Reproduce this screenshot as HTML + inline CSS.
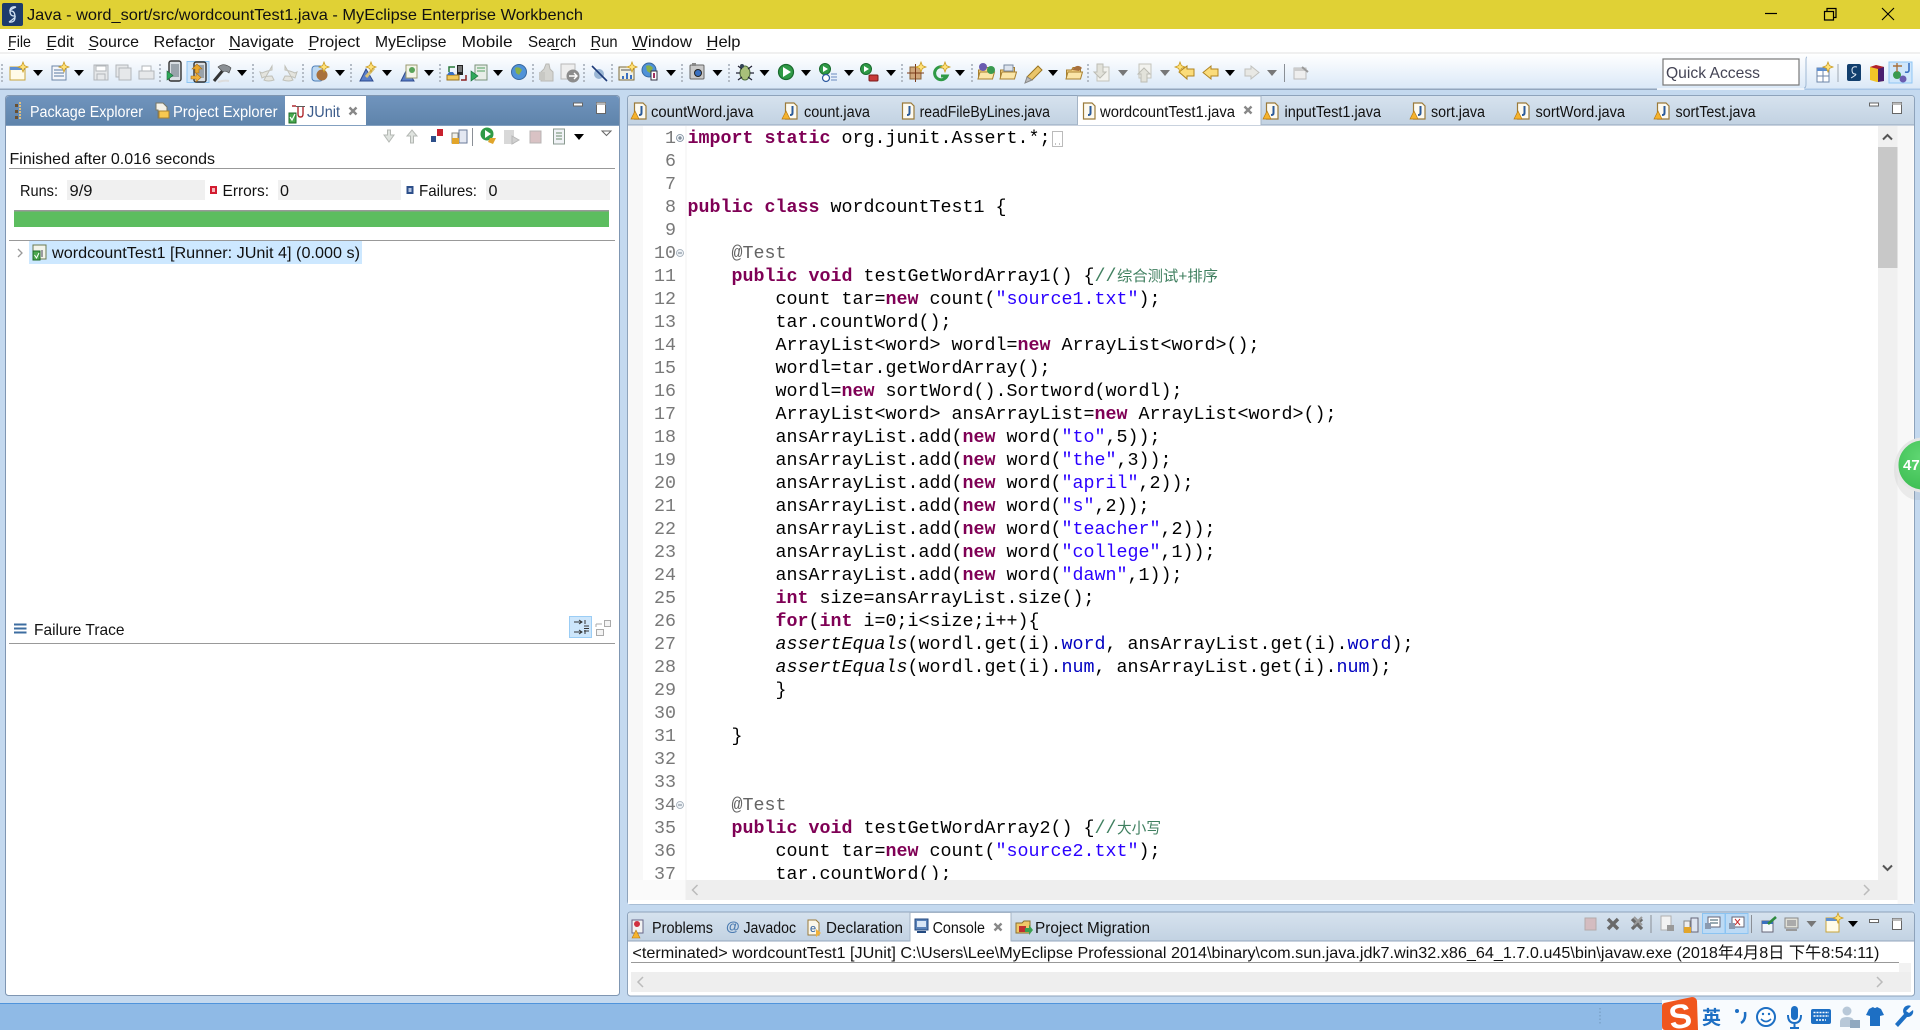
<!DOCTYPE html>
<html lang="en"><head><meta charset="utf-8"><title>Java - word_sort/src/wordcountTest1.java - MyEclipse Enterprise Workbench</title>
<style>
html,body{margin:0;padding:0;width:1920px;height:1030px;overflow:hidden;background:#c4d9ef}
svg{display:block}
text{font-family:"Liberation Sans","Noto Sans CJK SC",sans-serif;font-size:15.5px;fill:#111;white-space:pre}
.m text,text.m{font-size:16px}
.c text{font-family:"Liberation Mono","Noto Sans CJK SC",monospace;font-size:18.33px;fill:#000}
.n text{font-family:"Liberation Mono",monospace;font-size:18.33px;fill:#787878;text-anchor:end}
.k{fill:#7f0055!important;font-weight:bold}
.s{fill:#2a00ff!important}
.f{fill:#0000c0!important}
.a{fill:#646464!important}
.i{font-style:italic}
.g{fill:#3f7f5f!important}
.z{font-family:"Liberation Sans","Noto Sans CJK SC",sans-serif!important;font-size:15px!important;fill:#3f7f5f!important}
.w text{fill:#fff}
</style></head><body>
<svg xmlns="http://www.w3.org/2000/svg" width="1920" height="1030" viewBox="0 0 1920 1030">
<defs>
<linearGradient id="tb" x1="0" y1="0" x2="0" y2="1"><stop offset="0" stop-color="#fff"/><stop offset="1" stop-color="#dae8f7"/></linearGradient>
<linearGradient id="lt" x1="0" y1="0" x2="0" y2="1"><stop offset="0" stop-color="#7094bd"/><stop offset="1" stop-color="#5f84ab"/></linearGradient>
<linearGradient id="et" x1="0" y1="0" x2="0" y2="1"><stop offset="0" stop-color="#d6e2ee"/><stop offset="1" stop-color="#c2d2e2"/></linearGradient>
<radialGradient id="gc" cx=".45" cy=".35" r=".8"><stop offset="0" stop-color="#5fd672"/><stop offset="1" stop-color="#36b94c"/></radialGradient>
<path id="ar" d="M-5 -3H5L0 3Z" fill="#000"/>
<path id="ag" d="M-5 -3H5L0 3Z" fill="#777"/>
<path id="st" d="M0-5L1.4-1.4 5 0 1.4 1.4 0 5-1.4 1.4-5 0-1.4-1.4Z" fill="#ffe27a" stroke="#c99a20" stroke-width=".8"/>
<g id="jf"><path d="M-5.5-8H3L6-5V8H-5.5Z" fill="#fdfaf0" stroke="#9a7a3a" stroke-width="1.2"/><path d="M1.5-5V2Q1.5 4-1 4" fill="none" stroke="#2a5a9a" stroke-width="2"/></g>
<g id="jw"><use href="#jf"/><path d="M-9 8L-5 0-1 8Z" fill="#f5b32e" stroke="#b87a10" stroke-width=".7"/></g>
<g id="grip"><path d="M0-8V10" stroke="#b4bcc6" stroke-width="2" stroke-dasharray="2 2"/></g>
<g id="minb"><rect x="-4.5" y="-1.5" width="9" height="3" fill="#fff" stroke="#666"/></g>
<g id="maxb"><rect x="-4.5" y="-5.5" width="9" height="11" fill="#fff" stroke="#666"/><rect x="-4.5" y="-5.5" width="9" height="2.5" fill="#bbb"/></g>
<path id="xc" d="M-3.5-3.5L3.5 3.5M3.5-3.5L-3.5 3.5" stroke="#888" stroke-width="2.4" fill="none"/>
<g id="fold"><path d="M-7.5-3H-2.5L-1-5.5H6.5V6H-7.5Z" fill="#f8d88a" stroke="#a88030"/><path d="M-8 6L-6-1H8.5L6.5 6Z" fill="#fbe6a8" stroke="#a88030"/></g>
<g id="phone"><rect x="-6" y="-10" width="12" height="20" rx="2" fill="#d8dde2" stroke="#333" stroke-width="1.4"/><rect x="-4" y="-7" width="8" height="13" fill="#9aa3ab"/></g>
</defs>

<!-- window background -->
<rect width="1920" height="1030" fill="#c4d9ef"/>
<!-- title bar -->
<rect width="1920" height="29" fill="#e0d135"/>
<rect x="2" y="3" width="21" height="23" rx="2" fill="#1d3c6c"/>
<path d="M16 7Q10 6 10 11T14 16 9 22M9 22Q15 23 15 17T11 11 16 7" fill="none" stroke="#cfe0f2" stroke-width="1.3"/>
<text class="m" x="27" y="20" textLength="556" lengthAdjust="spacingAndGlyphs">Java - word_sort/src/wordcountTest1.java - MyEclipse Enterprise Workbench</text>
<path d="M1765 13.5H1777" stroke="#000" stroke-width="1.2"/>
<path d="M1824.5 11.5H1833.5V20H1824.5ZM1827 11.5V8.5H1836V17.5H1833.5" fill="none" stroke="#000" stroke-width="1.2"/>
<path d="M1882 8L1894 20M1894 8L1882 20" stroke="#000" stroke-width="1.1"/>

<!-- menu -->
<rect y="29" width="1920" height="23" fill="#fff"/>
<rect y="52" width="1920" height="2" fill="#f0f0f0"/>
<g class="m">
<text x="8" y="47" textLength="23" lengthAdjust="spacingAndGlyphs">File</text>
<text x="46.5" y="47" textLength="27.5" lengthAdjust="spacingAndGlyphs">Edit</text>
<text x="88.5" y="47" textLength="50.5" lengthAdjust="spacingAndGlyphs">Source</text>
<text x="153.5" y="47" textLength="61.5" lengthAdjust="spacingAndGlyphs">Refactor</text>
<text x="229" y="47" textLength="65" lengthAdjust="spacingAndGlyphs">Navigate</text>
<text x="308.5" y="47" textLength="51.5" lengthAdjust="spacingAndGlyphs">Project</text>
<text x="375" y="47" textLength="71.5" lengthAdjust="spacingAndGlyphs">MyEclipse</text>
<text x="461.6" y="47" textLength="51" lengthAdjust="spacingAndGlyphs">Mobile</text>
<text x="528" y="47" textLength="48" lengthAdjust="spacingAndGlyphs">Search</text>
<text x="590.6" y="47" textLength="27" lengthAdjust="spacingAndGlyphs">Run</text>
<text x="632" y="47" textLength="60" lengthAdjust="spacingAndGlyphs">Window</text>
<text x="706.5" y="47" textLength="34" lengthAdjust="spacingAndGlyphs">Help</text>
</g>
<path d="M8 49.5H15M46.5 49.5H54M88.5 49.5H96M195 49.5H201M229 49.5H240M308.5 49.5H316M551 49.5H559M590.6 49.5H599M632 49.5H646M706.5 49.5H716" stroke="#111" stroke-width="1"/>

<!-- toolbar -->
<rect y="54" width="1920" height="35" fill="url(#tb)"/>
<rect y="88.5" width="1657" height="1.5" fill="#93a6bd"/>
<rect x="1657" y="88" width="147" height="2" fill="#eef4fb"/>
<rect x="1805" y="88.5" width="115" height="1.5" fill="#a9c6e6"/>

<!-- grippers -->
<use href="#grip" x="2" y="72"/><use href="#grip" x="160" y="72"/><use href="#grip" x="253" y="72"/><use href="#grip" x="303" y="72"/><use href="#grip" x="351" y="72"/><use href="#grip" x="440" y="72"/><use href="#grip" x="533" y="72"/><use href="#grip" x="584" y="72"/><use href="#grip" x="612" y="72"/><use href="#grip" x="682" y="72"/><use href="#grip" x="729" y="72"/><use href="#grip" x="902" y="72"/><use href="#grip" x="972" y="72"/><use href="#grip" x="1088" y="72"/>
<rect x="1284" y="64" width="1" height="18" fill="#8a8f96"/>

<!-- drop arrows -->
<use href="#ar" x="38" y="73"/><use href="#ar" x="79" y="73"/><use href="#ar" x="242" y="73"/><use href="#ar" x="340" y="73"/><use href="#ar" x="387" y="73"/><use href="#ar" x="429" y="73"/><use href="#ar" x="498" y="73"/><use href="#ar" x="671" y="73"/><use href="#ar" x="717.5" y="73"/><use href="#ar" x="764.5" y="73"/><use href="#ar" x="806" y="73"/><use href="#ar" x="849" y="73"/><use href="#ar" x="891" y="73"/><use href="#ar" x="960" y="73"/><use href="#ar" x="1053" y="73"/><use href="#ag" x="1123" y="73"/><use href="#ag" x="1165" y="73"/><use href="#ar" x="1230" y="73"/><use href="#ag" x="1272" y="73"/>

<!-- toolbar icons -->
<rect x="10" y="67" width="15" height="13" fill="#fffbe8" stroke="#c9a53a"/><rect x="10" y="67" width="15" height="3" fill="#5f8fd0"/><use href="#st" x="23" y="67"/>
<rect x="52" y="66" width="14" height="14" fill="#f4f6fa" stroke="#6d86a8"/><path d="M54 70H64M54 73H64M54 76H64" stroke="#5878a0"/><use href="#st" x="64" y="67"/>
<g fill="#e6e8ea" stroke="#b2b6ba"><rect x="94" y="65" width="14" height="15"/><rect x="96" y="66" width="10" height="5" fill="#fff"/><rect x="97" y="74" width="8" height="6"/>
<rect x="116" y="65" width="12" height="12"/><rect x="119" y="68" width="12" height="12"/>
<rect x="142" y="66" width="9" height="6" fill="#fff"/><rect x="139" y="71" width="15" height="8"/></g>
<use href="#phone" x="175" y="71"/><path d="M167 71V80L173 75.5Z" fill="#2fa85a" stroke="#176e38" stroke-width=".6"/>
<rect x="187" y="61.5" width="22" height="21" fill="#cfe6fb" stroke="#8fc6f4"/>
<use href="#phone" x="200" y="72"/><path d="M197 64L192 69H195V73H199V69H202Z" fill="#e9a62b" stroke="#a8701a" stroke-width=".6"/><path d="M191 76H196V73L201 77.5 196 82V79H191Z" fill="#f0b23a" stroke="#a8701a" stroke-width=".6"/>
<path d="M214 81L224 69" stroke="#333" stroke-width="3"/><path d="M218 67Q224 62 231 68L229 73Q225 70 223 72Z" fill="#8a8f94" stroke="#444" stroke-width=".6"/><path d="M218 82Q224 80 229 81" stroke="#ddd" stroke-width="2" fill="none"/>
<path d="M272 66L272 70Q266 71 262 73L260 72 262 78Q265 76 272 76 273 78 274 80 268 82 264 80Z" fill="#e4e4de" stroke="#c0c0b8"/><path d="M285 66L285 70Q291 71 295 73L297 72 295 78Q292 76 285 76 284 78 283 80 289 82 293 80Z" fill="#e4e4de" stroke="#c0c0b8"/>
<rect x="312" y="66" width="11" height="15" rx="3" fill="#bcd8f2" stroke="#4f7fb8"/><circle cx="322" cy="75" r="5.5" fill="#a8703c"/><use href="#st" x="324" y="67"/>
<path d="M360 81L366 69 373 81Z" fill="#5a7ec8" stroke="#2d4a8e"/><path d="M366 77L374 68" stroke="#d7c27a" stroke-width="3"/><use href="#st" x="371" y="67"/>
<path d="M401 81L407 69 414 81Z" fill="#5a7ec8" stroke="#2d4a8e"/><rect x="406" y="65" width="11" height="13" fill="#f4f4e8" stroke="#9a9a70"/><circle cx="412" cy="70" r="3" fill="#59a35a"/>
<rect x="457" y="65" width="6" height="10" fill="#222"/><path d="M458 67H462M458 69H462M458 71H462" stroke="#ccc"/><path d="M455 67H449V72" fill="none" stroke="#287a3a" stroke-width="1.5"/><path d="M447 75H459V80H447Z" fill="#f0c85a" stroke="#9a7420"/><path d="M447 75L449 72H453L455 75" fill="#3a70c0"/><path d="M461 80H466V75" fill="none" stroke="#8a2020" stroke-width="1.5"/>
<rect x="475" y="65" width="12" height="15" fill="#e8eee8" stroke="#7a927a"/><path d="M477 68H485M477 71H485" stroke="#50a060"/><path d="M471 71V81L478 76Z" fill="#2fa85a" stroke="#176e38" stroke-width=".6"/>
<circle cx="519" cy="72" r="7.5" fill="#4f92d8" stroke="#36679e"/><path d="M515 68Q519 66 522 70L519 75 516 73Z" fill="#88b048"/>
<path d="M541 81V72L544 69 546 64H549L550 69 553 72V81Z" fill="#d4d4d0" stroke="#b8b8b4"/><rect x="539" y="72" width="6" height="8" fill="#c8c8c4"/>
<rect x="561" y="64" width="14" height="15" fill="#eee" stroke="#b8b8b8"/><circle cx="573" cy="76" r="6.5" fill="#8c8c8c"/><path d="M569 76H577M574 73L577 76 574 79" fill="none" stroke="#fff" stroke-width="1.4"/>
<circle cx="599" cy="74" r="5" fill="#9ab6d4"/><path d="M592 66L607 81" stroke="#1d3a78" stroke-width="1.6"/>
<rect x="619" y="67" width="15" height="13" fill="#f0f0e4" stroke="#7c6a3a"/><path d="M622 76H624V79H622ZM626 73H628V79H626ZM630 75H632V79H630Z" fill="#3a70c0"/><path d="M621 70H632" stroke="#555"/><use href="#st" x="632" y="67"/>
<circle cx="649" cy="70" r="7" fill="#4f92d8" stroke="#36679e"/><path d="M646 66Q650 64 653 68L650 73 647 71Z" fill="#88b048"/><rect x="651" y="71" width="6" height="9" fill="#fff" stroke="#334"/><rect x="653" y="73" width="2" height="5" fill="#a03060"/>
<rect x="690" y="65" width="14" height="14" rx="1" fill="#c9c9c9" stroke="#666"/><circle cx="698" cy="73" r="3.5" fill="#3a70c0" stroke="#222"/><rect x="692" y="63" width="4" height="3" fill="#888"/>
<ellipse cx="745" cy="73" rx="5" ry="7" fill="#a8c07a" stroke="#4a6a38"/><path d="M738 66L742 69M752 66L748 69M736 73H740M754 73H750M738 80L742 77M752 80L748 77" stroke="#223" stroke-width="1.2"/><circle cx="742" cy="66" r="2" fill="#345"/>
<circle cx="786" cy="72" r="7.5" fill="#2f9a46" stroke="#1a6a2e" stroke-width="1.2"/><path d="M783 67V77L791 72Z" fill="#fff"/>
<circle cx="825" cy="69" r="5.5" fill="#2f9a46" stroke="#1a6a2e"/><path d="M823 66V72L828 69Z" fill="#fff"/><circle cx="826" cy="78" r="3.5" fill="#fff" stroke="#2d5aa0" stroke-width="1.2"/><path d="M831 74H837M831 77H837M831 80H837" stroke="#6a8ac0"/>
<circle cx="866" cy="69" r="5.5" fill="#2f9a46" stroke="#1a6a2e"/><path d="M864 66V72L869 69Z" fill="#fff"/><rect x="869" y="75" width="9" height="6" rx="1" fill="#c83a3a" stroke="#7a1a1a"/>
<rect x="910" y="67" width="11" height="12" fill="#cfa67a" stroke="#8a6238"/><path d="M915.5 64V82M907 73H924" stroke="#7a3a1a"/><use href="#st" x="921" y="67"/>
<path d="M945 68A6.5 6.5 0 1 0 947 76H941" fill="none" stroke="#2f9a46" stroke-width="3"/><use href="#st" x="945" y="67"/>
<use href="#fold" x="986" y="73"/><circle cx="983" cy="67" r="4" fill="#6a5cb0"/><circle cx="991" cy="70" r="4" fill="#3a9a50"/>
<use href="#fold" x="1008" y="73"/><rect x="1004" y="65" width="9" height="6" fill="#dde4ee" stroke="#7a8aa0"/>
<path d="M1027 77L1038 66 1042 70 1032 80Z" fill="#eac56a" stroke="#9a7420"/><path d="M1025 83L1027 77 1032 80Z" fill="#bbb" stroke="#888"/>
<use href="#fold" x="1074" y="73"/><path d="M1072 70Q1077 63 1082 68L1079 71Z" fill="#a8703c"/>
<rect x="1097" y="67" width="12" height="14" fill="#f2f2ee" stroke="#c4c4bc"/><path d="M1097 64H1103V72H1106L1100 78 1094 72H1097Z" fill="#e2e2da" stroke="#bcbcb4"/>
<rect x="1139" y="64" width="12" height="14" fill="#f2f2ee" stroke="#c4c4bc"/><path d="M1141 82V74H1138L1144 68 1150 74H1147V82Z" fill="#e2e2da" stroke="#bcbcb4"/>
<path d="M1179 72L1187 66V69H1194V76H1187V79Z" fill="#fbdc7a" stroke="#b08420"/><use href="#st" x="1180" y="67"/>
<path d="M1203 72.5L1211 66V69H1218V76H1211V79Z" fill="#fbdc7a" stroke="#b08420"/>
<path d="M1259 72.5L1251 66V69H1245V76H1251V79Z" fill="#e8e8e4" stroke="#c0c0bc"/>
<rect x="1294" y="68" width="12" height="11" fill="#eee" stroke="#bbb"/><rect x="1294" y="68" width="12" height="3" fill="#ccc"/><path d="M1302 67L1308 72" stroke="#999" stroke-width="2"/>

<!-- quick access + perspectives -->
<rect x="1663" y="59" width="136" height="26" fill="#fff" stroke="#777" stroke-width="1.2"/>
<text x="1666" y="78" textLength="94" lengthAdjust="spacingAndGlyphs" style="font-size:16px;fill:#445">Quick Access</text>
<path d="M1807 57Q1806 57 1806 60V84Q1806 88 1804 88" fill="none" stroke="#9fb8d4"/>
<rect x="1817" y="68" width="12" height="14" fill="#fff" stroke="#6d86a8"/><rect x="1817" y="68" width="12" height="3" fill="#5f8fd0"/><path d="M1823 71V82M1817 76H1829" stroke="#6d86a8"/><use href="#st" x="1828" y="67"/>
<rect x="1837.5" y="64" width="1" height="18" fill="#9fa8b2"/>
<rect x="1847" y="64" width="14" height="17" rx="2" fill="#123f6e"/><path d="M1857 67Q1852 66 1852 70T1855 74 1851 78" fill="none" stroke="#dfe9f4" stroke-width="1"/>
<path d="M1870 67L1876 65 1884 67V81L1877 82 1870 80Z" fill="#f2c528"/><path d="M1878 66L1884 67V81L1878 82Z" fill="#4a1f6e"/><path d="M1870 67L1876 65 1884 67 1878 69Z" fill="#b02030"/>
<rect x="1889" y="62" width="23" height="21" fill="#cfe6fb" stroke="#8fc6f4"/><circle cx="1897" cy="75" r="4" fill="#3a9a50"/><circle cx="1903" cy="79" r="3.5" fill="#6a5cb0"/><path d="M1893 66H1902M1897 63V72" stroke="#a8703c" stroke-width="1.4"/><path d="M1909 63V70Q1909 73 1905 72" fill="none" stroke="#3a70c0" stroke-width="1.6"/>

<!-- LEFT PANEL -->
<rect x="5.5" y="95.5" width="614" height="900" rx="3" fill="#fff" stroke="#7f96b2"/>
<path d="M6 125V99Q6 96 9 96H616Q619 96 619 99V125Z" fill="url(#lt)"/>
<rect x="6" y="125" width="613" height="1" fill="#83a0c0"/>
<path d="M285 125V96H366V125Z" fill="#fff"/>
<g fill="#6a5030"><rect x="15" y="104" width="3" height="3"/><rect x="15" y="110" width="3" height="3"/><rect x="15" y="116" width="3" height="3"/></g><path d="M20 102V120" stroke="#e0c080" stroke-width="2" stroke-dasharray="2 1"/>
<path d="M156 103H163L167 107V118H158V110H156Z" fill="#f4f2e8" stroke="#776"/><rect x="159" y="111" width="10" height="7" fill="#f8c850" stroke="#a88030"/>
<path d="M289 113V123H296V113Z" fill="#49a84e" stroke="#1e6a28"/><path d="M290 117L292 120 295 114" stroke="#fff" fill="none" stroke-width="1.2"/><path d="M292 106H296M298 107V114Q298 117 300.5 117T303 114V107" fill="none" stroke="#b02a30" stroke-width="1.4"/><path d="M296 106.5H305" stroke="#333" stroke-width=".8"/>
<g class="w">
<text x="30" y="117" textLength="113" lengthAdjust="spacingAndGlyphs">Package Explorer</text>
<text x="173" y="117" textLength="104.5" lengthAdjust="spacingAndGlyphs">Project Explorer</text>
</g>
<text x="307" y="117" textLength="33" lengthAdjust="spacingAndGlyphs" style="fill:#3a5a8a">JUnit</text>
<use href="#xc" x="353" y="111"/>
<use href="#minb" x="578" y="104.5"/><use href="#maxb" x="601" y="108"/>

<!-- junit toolbar -->
<path d="M387.5 130V135H384L389 142 394 135H390.5V130Z" fill="#dfe3df" stroke="#b4b8b4"/>
<path d="M410.5 143V136H407L412 130 417 136H413.5V143Z" fill="#dfe3df" stroke="#b4b8b4"/>
<rect x="431" y="136" width="5" height="6" fill="#2d4f8a"/><rect x="437" y="129" width="6" height="7" fill="#c8202e"/>
<rect x="452" y="133" width="6" height="10" fill="#f0f0ea" stroke="#8a8a80"/><rect x="459" y="130" width="8" height="13" fill="#e4e8f2" stroke="#6a7a98"/><rect x="452" y="138" width="7" height="6" fill="#e2a52a"/>
<rect x="472" y="128" width="1" height="18" fill="#8a8f96"/>
<circle cx="487" cy="134" r="6.5" fill="#2f9a46"/><path d="M485 130V138L491 134Z" fill="#fff"/><path d="M490 138H496L493 144 488 142Z" fill="#e0a52a"/>
<rect x="504" y="130" width="10" height="14" fill="#d8d8d8"/><path d="M512 136L519 140 512 144Z" fill="#d0d0d0" stroke="#b8b8b8"/>
<rect x="530" y="131" width="11" height="12" fill="#d9c2c4" stroke="#b8b4b4"/>
<rect x="553.5" y="129" width="11" height="15" fill="#f0f2f6" stroke="#8a9a90"/><path d="M556 133H562M556 136H562M556 139H562" stroke="#6a8a6a"/>
<use href="#ar" x="579" y="137"/>
<path d="M602 131H611L606.5 135.5Z" fill="#fff" stroke="#666"/>

<text x="9.5" y="164" textLength="205.5" lengthAdjust="spacingAndGlyphs" class="m">Finished after 0.016 seconds</text>
<rect x="9" y="168" width="606" height="1" fill="#999"/>
<rect x="67" y="180" width="138" height="20" fill="#f0f0f0"/>
<rect x="278" y="180" width="123" height="20" fill="#f0f0f0"/>
<rect x="486" y="180" width="124" height="20" fill="#f0f0f0"/>
<text x="20" y="196" textLength="38" lengthAdjust="spacingAndGlyphs" class="m">Runs:</text>
<text x="69.5" y="196" textLength="23" lengthAdjust="spacingAndGlyphs" class="m">9/9</text>
<rect x="210" y="186" width="7" height="8" fill="#d31c30"/><rect x="212" y="188" width="3" height="4" fill="#f6b6bc"/>
<text x="222.5" y="196" textLength="46.5" lengthAdjust="spacingAndGlyphs" class="m">Errors:</text>
<text x="280" y="196" textLength="9" lengthAdjust="spacingAndGlyphs" class="m">0</text>
<rect x="406.5" y="186" width="7" height="8" fill="#2d4f8a"/><rect x="408.5" y="188" width="3" height="4" fill="#b6c6e2"/>
<text x="419" y="196" textLength="58" lengthAdjust="spacingAndGlyphs" class="m">Failures:</text>
<text x="488.5" y="196" textLength="9" lengthAdjust="spacingAndGlyphs" class="m">0</text>
<rect x="14" y="210" width="595" height="17" fill="#5cbd5f"/><rect x="14" y="210" width="595" height="1.5" fill="#999"/>
<rect x="9" y="240" width="606" height="1" fill="#999"/>
<rect x="29" y="241" width="333" height="23" fill="#cde8ff"/>
<path d="M18 249L22 253 18 257" fill="none" stroke="#999" stroke-width="1.3"/>
<rect x="33" y="245" width="13" height="14" fill="#f2f4ea" stroke="#6a7a50"/><rect x="33" y="251" width="7" height="9" fill="#4aa84e" stroke="#1e6a28"/><path d="M34.5 255L36.5 258 39 253" stroke="#fff" fill="none"/><path d="M42 250V257" stroke="#445"/>
<text x="52" y="258" textLength="308" lengthAdjust="spacingAndGlyphs" class="m">wordcountTest1 [Runner: JUnit 4] (0.000 s)</text>
<path d="M14 624.5H26.5M14 628.5H26.5M14 632.5H26.5" stroke="#3d6da0" stroke-width="2"/>
<text x="34" y="635" textLength="90.5" lengthAdjust="spacingAndGlyphs" class="m">Failure Trace</text>
<rect x="569.5" y="616.5" width="22" height="21" fill="#cde6fb" stroke="#9bcdf5"/>
<path d="M574 622H582M579 620L582 622 579 624M574 632H582M579 630L582 632 579 634M585 620V624M585 630V634M584 626H589M584 628.5H589M584 631H589" stroke="#333" fill="none"/>
<g fill="#f4f4f4" stroke="#aaa"><rect x="604.5" y="620.5" width="6" height="6"/><rect x="596.5" y="629.5" width="7" height="6"/></g><path d="M596 624H602M596 624V627" stroke="#aaa" fill="none"/>
<rect x="9" y="643" width="606" height="1" fill="#999"/>

<!-- EDITOR PANEL -->
<rect x="627.5" y="95.5" width="1287" height="808.5" rx="3" fill="#fff" stroke="#8ea3bb"/>
<path d="M628 125V99Q628 96 631 96H1911Q1914 96 1914 99V125Z" fill="url(#et)"/>
<rect x="628" y="124.5" width="1286" height="1" fill="#93a6bc"/>
<path d="M1077.5 125V96H1261V125Z" fill="#fff"/>
<path d="M1077.5 125V96H1261V125" fill="none" stroke="#a4b4c6"/>
<use href="#jw" x="640" y="111"/><use href="#jw" x="791" y="111"/><use href="#jf" x="908" y="111"/><use href="#jf" x="1089" y="111"/><use href="#jw" x="1272" y="111"/><use href="#jw" x="1419" y="111"/><use href="#jw" x="1523" y="111"/><use href="#jw" x="1663" y="111"/>
<text x="651" y="117" textLength="102.5" lengthAdjust="spacingAndGlyphs">countWord.java</text>
<text x="804" y="117" textLength="66" lengthAdjust="spacingAndGlyphs">count.java</text>
<text x="919.6" y="117" textLength="130.4" lengthAdjust="spacingAndGlyphs">readFileByLines.java</text>
<text x="1100" y="117" textLength="135" lengthAdjust="spacingAndGlyphs">wordcountTest1.java</text>
<use href="#xc" x="1248" y="110"/>
<text x="1284.5" y="117" textLength="96.5" lengthAdjust="spacingAndGlyphs">inputTest1.java</text>
<text x="1431" y="117" textLength="54" lengthAdjust="spacingAndGlyphs">sort.java</text>
<text x="1535.5" y="117" textLength="89.5" lengthAdjust="spacingAndGlyphs">sortWord.java</text>
<text x="1675.5" y="117" textLength="80" lengthAdjust="spacingAndGlyphs">sortTest.java</text>
<use href="#minb" x="1874" y="104.5"/><use href="#maxb" x="1897" y="108"/>

<!-- gutter -->
<rect x="628" y="126" width="15" height="754" fill="#f8f8f8"/>
<rect x="685.5" y="126" width="1" height="754" fill="#f2f2f2"/>
<circle cx="680" cy="138" r="3.5" fill="#eef2f6" stroke="#7a8a9a" stroke-width=".8"/><path d="M678 138H682M680 136V140" stroke="#456" stroke-width=".8"/>
<circle cx="680" cy="253" r="3.5" fill="#eef2f6" stroke="#9aa6b2" stroke-width=".8"/><path d="M678 253H682" stroke="#567" stroke-width=".8"/>
<circle cx="680" cy="805" r="3.5" fill="#eef2f6" stroke="#9aa6b2" stroke-width=".8"/><path d="M678 805H682" stroke="#567" stroke-width=".8"/>
<g class="n">
<text x="676" y="143">1</text><text x="676" y="166">6</text><text x="676" y="189">7</text><text x="676" y="212">8</text><text x="676" y="235">9</text><text x="676" y="258">10</text><text x="676" y="281">11</text><text x="676" y="304">12</text><text x="676" y="327">13</text><text x="676" y="350">14</text><text x="676" y="373">15</text><text x="676" y="396">16</text><text x="676" y="419">17</text><text x="676" y="442">18</text><text x="676" y="465">19</text><text x="676" y="488">20</text><text x="676" y="511">21</text><text x="676" y="534">22</text><text x="676" y="557">23</text><text x="676" y="580">24</text><text x="676" y="603">25</text><text x="676" y="626">26</text><text x="676" y="649">27</text><text x="676" y="672">28</text><text x="676" y="695">29</text><text x="676" y="718">30</text><text x="676" y="741">31</text><text x="676" y="764">32</text><text x="676" y="787">33</text><text x="676" y="810">34</text><text x="676" y="833">35</text><text x="676" y="856">36</text><text x="676" y="879">37</text>
</g>
<!-- code -->
<g class="c">
<text x="687.5" y="143"><tspan class="k">import static</tspan> org.junit.Assert.*;</text>
<rect x="1052.5" y="131.5" width="10" height="15" fill="#fff" stroke="#bbb"/><path d="M1055 144H1056M1059 144H1060" stroke="#888"/>
<text x="687.5" y="212"><tspan class="k">public class</tspan> wordcountTest1 {</text>
<text x="731.5" y="258" class="a"><tspan class="a">@Test</tspan></text>
<text x="731.5" y="281"><tspan class="k">public void</tspan> testGetWordArray1() {<tspan class="g">//</tspan></text>
<text x="1117" y="281" class="z" textLength="101" lengthAdjust="spacingAndGlyphs">综合测试+排序</text>
<text x="775.5" y="304">count tar=<tspan class="k">new</tspan> count(<tspan class="s">"source1.txt"</tspan>);</text>
<text x="775.5" y="327">tar.countWord();</text>
<text x="775.5" y="350">ArrayList&lt;word&gt; wordl=<tspan class="k">new</tspan> ArrayList&lt;word&gt;();</text>
<text x="775.5" y="373">wordl=tar.getWordArray();</text>
<text x="775.5" y="396">wordl=<tspan class="k">new</tspan> sortWord().Sortword(wordl);</text>
<text x="775.5" y="419">ArrayList&lt;word&gt; ansArrayList=<tspan class="k">new</tspan> ArrayList&lt;word&gt;();</text>
<text x="775.5" y="442">ansArrayList.add(<tspan class="k">new</tspan> word(<tspan class="s">"to"</tspan>,5));</text>
<text x="775.5" y="465">ansArrayList.add(<tspan class="k">new</tspan> word(<tspan class="s">"the"</tspan>,3));</text>
<text x="775.5" y="488">ansArrayList.add(<tspan class="k">new</tspan> word(<tspan class="s">"april"</tspan>,2));</text>
<text x="775.5" y="511">ansArrayList.add(<tspan class="k">new</tspan> word(<tspan class="s">"s"</tspan>,2));</text>
<text x="775.5" y="534">ansArrayList.add(<tspan class="k">new</tspan> word(<tspan class="s">"teacher"</tspan>,2));</text>
<text x="775.5" y="557">ansArrayList.add(<tspan class="k">new</tspan> word(<tspan class="s">"college"</tspan>,1));</text>
<text x="775.5" y="580">ansArrayList.add(<tspan class="k">new</tspan> word(<tspan class="s">"dawn"</tspan>,1));</text>
<text x="775.5" y="603"><tspan class="k">int</tspan> size=ansArrayList.size();</text>
<text x="775.5" y="626"><tspan class="k">for</tspan>(<tspan class="k">int</tspan> i=0;i&lt;size;i++){</text>
<text x="775.5" y="649"><tspan class="i">assertEquals</tspan>(wordl.get(i).<tspan class="f">word</tspan>, ansArrayList.get(i).<tspan class="f">word</tspan>);</text>
<text x="775.5" y="672"><tspan class="i">assertEquals</tspan>(wordl.get(i).<tspan class="f">num</tspan>, ansArrayList.get(i).<tspan class="f">num</tspan>);</text>
<text x="775.5" y="695">}</text>
<text x="731.5" y="741">}</text>
<text x="731.5" y="810"><tspan class="a">@Test</tspan></text>
<text x="731.5" y="833"><tspan class="k">public void</tspan> testGetWordArray2() {<tspan class="g">//</tspan></text>
<text x="1117" y="833" class="z" textLength="44" lengthAdjust="spacingAndGlyphs">大小写</text>
<text x="775.5" y="856">count tar=<tspan class="k">new</tspan> count(<tspan class="s">"source2.txt"</tspan>);</text>
<text x="775.5" y="879">tar.countWord();</text>
</g>
<!-- editor scrollbars -->
<rect x="628" y="880" width="1286" height="24" fill="#fff"/>
<rect x="628" y="880" width="57.5" height="20" fill="#fafafa"/>
<rect x="685.5" y="880" width="1212" height="20" fill="#eee"/>
<path d="M697.5 885L692.5 890 697.5 895" fill="none" stroke="#bbb" stroke-width="1.5"/>
<path d="M1864 885L1869 890 1864 895" fill="none" stroke="#bbb" stroke-width="1.5"/>
<rect x="1878" y="126" width="19.5" height="754" fill="#fff"/>
<rect x="1897.5" y="126" width="16" height="778" fill="#f8f8f8"/>
<rect x="1878" y="126" width="19.5" height="21" fill="#f0f0f0"/>
<rect x="1878" y="147" width="19.5" height="121" fill="#c8c8c8"/>
<rect x="1878" y="268" width="19.5" height="612" fill="#f0f0f0"/>
<path d="M1883 139.5L1887.5 135 1892 139.5" fill="none" stroke="#555" stroke-width="2"/>
<path d="M1883 865.5L1887.5 870 1892 865.5" fill="none" stroke="#555" stroke-width="2"/>

<!-- CONSOLE PANEL -->
<rect x="627.5" y="912" width="1287" height="84" rx="3" fill="#fff" stroke="#8ea3bb"/>
<path d="M628 941V915Q628 912.5 631 912.5H1911Q1914 912.5 1914 915V941Z" fill="url(#et)"/>
<rect x="628" y="940.5" width="1286" height="1" fill="#93a6bc"/>
<path d="M910 941V912.5H1011V941Z" fill="#fff" stroke="#a4b4c6"/><rect x="910.5" y="940" width="100" height="2" fill="#fff"/>
<rect x="632" y="920" width="11" height="13" fill="#f2f2f2" stroke="#668"/><circle cx="637" cy="924" r="3" fill="#d03040"/><path d="M632 938L636 930 640 938Z" fill="#f5b32e" stroke="#b87a10" stroke-width=".6"/>
<text x="726" y="931" style="font-size:14px;fill:#4a7ab0;font-weight:bold">@</text>
<path d="M808 920H816L819 923V935H808Z" fill="#fbf8ec" stroke="#9a7a3a"/><text x="810" y="932" style="font-size:11px;fill:#2a5a9a">e</text><path d="M816 929L821 933 816 937Z" fill="#f0b23a"/>
<rect x="915" y="919" width="13" height="11" fill="#5a82b8" stroke="#244a80"/><rect x="917" y="921" width="9" height="6" fill="#d8e6f6"/><rect x="917" y="931" width="9" height="2" fill="#244a80"/>
<path d="M1016 923H1022L1024 921H1030V933H1016Z" fill="#f0c868" stroke="#8a7030"/><rect x="1019" y="926" width="7" height="6" fill="#c03030"/><path d="M1025 928H1029V925L1033 930 1029 935V932H1025Z" fill="#3aa050"/>
<text x="652" y="933" textLength="61" lengthAdjust="spacingAndGlyphs">Problems</text>
<text x="743.5" y="933" textLength="52.5" lengthAdjust="spacingAndGlyphs">Javadoc</text>
<text x="826" y="933" textLength="77" lengthAdjust="spacingAndGlyphs">Declaration</text>
<text x="932.6" y="933" textLength="52.4" lengthAdjust="spacingAndGlyphs">Console</text>
<use href="#xc" x="998" y="927"/>
<text x="1035" y="933" textLength="115" lengthAdjust="spacingAndGlyphs">Project Migration</text>
<!-- console toolbar -->
<rect x="1585" y="918" width="11" height="12" fill="#d4bcc0" stroke="#b4aaaa"/>
<path d="M1608 919L1618 929M1618 919L1608 929" stroke="#6a6a6a" stroke-width="3.4"/>
<path d="M1632 919L1642 929M1642 919L1632 929" stroke="#6a6a6a" stroke-width="3.2"/><path d="M1634 917L1642 925M1642 917L1634 925" stroke="#9a9a9a" stroke-width="2"/>
<rect x="1650.5" y="915" width="1" height="18" fill="#8a8f96"/>
<rect x="1661" y="916" width="10" height="14" fill="#f2f2f2" stroke="#b0b0b0"/><rect x="1667" y="925" width="7" height="6" fill="#999"/>
<rect x="1684" y="921" width="6" height="11" fill="#eee" stroke="#888"/><rect x="1691" y="918" width="7" height="14" fill="#dde4f0" stroke="#667"/><rect x="1684" y="927" width="7" height="6" fill="#e2a52a"/>
<rect x="1702.5" y="913.5" width="22.5" height="20" fill="#bcdaf5" stroke="#8cc4f2"/><rect x="1725.5" y="913.5" width="22.5" height="20" fill="#bcdaf5" stroke="#8cc4f2"/>
<rect x="1708" y="917" width="12" height="10" fill="#fff" stroke="#667"/><path d="M1710 920H1718M1710 923H1718" stroke="#356"/><rect x="1705" y="923" width="6" height="6" fill="#8a9ab0"/>
<rect x="1732" y="917" width="12" height="10" fill="#fff" stroke="#667"/><path d="M1735 919L1740 925M1740 919L1735 925" stroke="#c83030"/><rect x="1729" y="923" width="6" height="6" fill="#8a9ab0"/>
<rect x="1751" y="915" width="1" height="18" fill="#8a8f96"/>
<rect x="1762" y="921" width="11" height="11" fill="#f4f8fc" stroke="#667"/><rect x="1762" y="921" width="11" height="3" fill="#3a70c0"/><path d="M1768 924L1776 917" stroke="#2f8a40" stroke-width="2.6"/>
<rect x="1785" y="918" width="13" height="10" fill="#e0e0d8" stroke="#888"/><rect x="1787" y="920" width="9" height="6" fill="#aaa"/><rect x="1786" y="929" width="11" height="2" fill="#999"/>
<use href="#ag" x="1811.5" y="924"/>
<rect x="1826" y="918" width="13" height="14" fill="#fffbe8" stroke="#c9a53a"/><rect x="1826" y="918" width="13" height="3" fill="#5f8fd0"/><use href="#st" x="1838" y="918"/>
<use href="#ar" x="1853" y="924"/>
<use href="#minb" x="1874" y="921"/><use href="#maxb" x="1897" y="924"/>
<!-- console text -->
<text x="632.4" y="958" textLength="1247" lengthAdjust="spacingAndGlyphs" class="m">&lt;terminated&gt; wordcountTest1 [JUnit] C:\Users\Lee\MyEclipse Professional 2014\binary\com.sun.java.jdk7.win32.x86_64_1.7.0.u45\bin\javaw.exe (2018年4月8日 下午8:54:11)</text>
<rect x="631" y="962" width="1268" height="1" fill="#999"/>
<rect x="631" y="972" width="1280" height="20" fill="#eee"/>
<rect x="1899" y="963" width="12" height="9" fill="#f2f2f2"/>
<path d="M643 977L638 982 643 987" fill="none" stroke="#bbb" stroke-width="1.5"/>
<path d="M1877 977L1882 982 1877 987" fill="none" stroke="#bbb" stroke-width="1.5"/>

<!-- status bar -->
<rect y="1003" width="1920" height="27" fill="#8fbae6"/>
<rect y="1003" width="1920" height="1" fill="#4f94dc"/>
<path d="M1600 1008V1024" stroke="#7aa2c8" stroke-width="1.5" stroke-dasharray="1.5 2"/>
<!-- green float -->
<ellipse cx="1918" cy="470" rx="24" ry="30" fill="#888" opacity=".12"/>
<circle cx="1923" cy="465" r="26" fill="url(#gc)" stroke="#e6e6e6" stroke-width="3"/>
<text x="1903" y="470" style="font-size:15px;font-weight:bold;fill:#fff">47</text>
<!-- IME -->
<rect x="1662" y="1000" width="258" height="30" fill="#f8fbfe"/>
<path d="M1664 1003L1692 997Q1696 997 1697 1001L1698 1030H1665Q1662 1030 1662 1026V1006Q1662 1004 1664 1003Z" fill="#f0561d"/>
<text x="1680" y="1028" text-anchor="middle" transform="rotate(-8 1680 1015)" style="font-size:34px;font-weight:bold;fill:#fff">S</text>
<text x="1702" y="1024" style="font-size:19px;font-weight:bold;fill:#1d6fc4;font-family:'Liberation Sans','Noto Sans CJK SC',sans-serif">英</text>
<circle cx="1737" cy="1011" r="2" fill="#1d6fc4"/><path d="M1745 1012Q1746 1020 1741 1023" fill="none" stroke="#1d6fc4" stroke-width="2.5"/>
<circle cx="1766" cy="1017" r="9" fill="#fff" stroke="#1d6fc4" stroke-width="2"/><circle cx="1763" cy="1014" r="1.2" fill="#1d6fc4"/><circle cx="1769" cy="1014" r="1.2" fill="#1d6fc4"/><path d="M1761 1019Q1766 1024 1771 1019" fill="none" stroke="#1d6fc4" stroke-width="1.6"/>
<rect x="1791" y="1006" width="7" height="14" rx="3.5" fill="#1d6fc4"/><path d="M1788 1015Q1788 1023 1794.5 1023T1801 1015M1794.5 1023V1027M1790 1028H1799" fill="none" stroke="#1d6fc4" stroke-width="2"/>
<rect x="1811" y="1009" width="20" height="15" rx="2" fill="#1d6fc4"/><path d="M1813.5 1012.5H1829M1813.5 1016H1829M1816 1020H1826" stroke="#fff" stroke-width="1.6" stroke-dasharray="2 1"/>
<circle cx="1847" cy="1011" r="4.5" fill="#b8c8d8"/><path d="M1840 1027V1022Q1840 1017 1847 1017T1854 1022V1027Z" fill="#b8c8d8"/><rect x="1850" y="1020" width="10" height="8" fill="#8fa8c0"/>
<path d="M1869 1009L1873 1007Q1875 1009 1877 1007L1881 1009 1884 1015 1880 1016V1026H1870V1016L1866 1015Z" fill="#1d6fc4"/>
<path d="M1911 1006A5.5 5.5 0 0 0 1904 1014L1895 1024 1898 1027 1907 1017A5.5 5.5 0 0 0 1913 1010L1909 1013 1906 1011Z" fill="#1d6fc4"/>
</svg>
</body></html>
